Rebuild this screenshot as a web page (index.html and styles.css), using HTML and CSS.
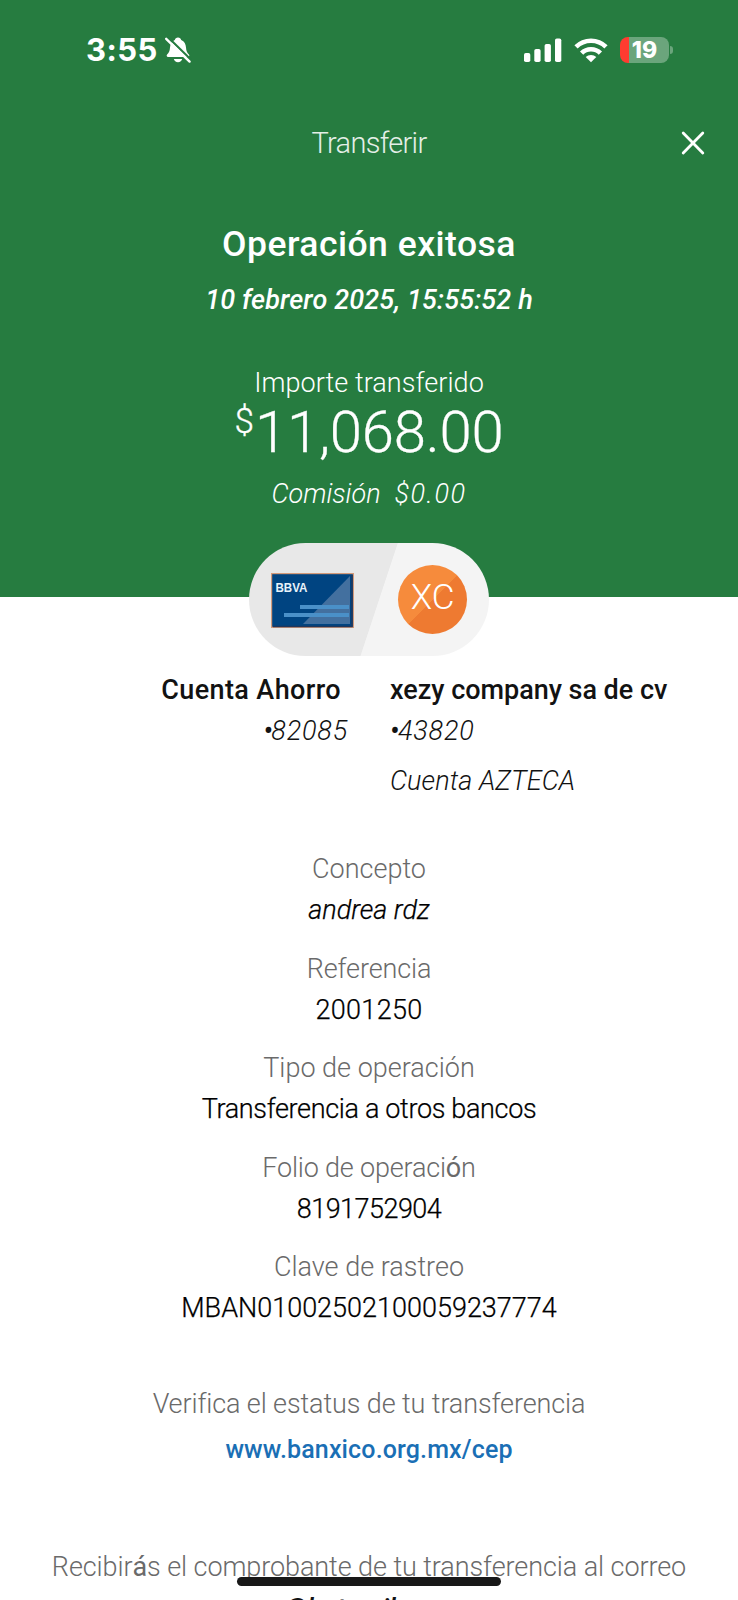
FILE: index.html
```html
<!DOCTYPE html>
<html lang="es">
<head>
<meta charset="utf-8">
<title>Transferir</title>
<link rel="stylesheet" href="styles.css">
</head>
<body>
<main class="screen">
  <header class="hero">
    <div class="status">
      <div class="status-left">
        <span class="time">3:55</span>
        <svg class="bell" width="28" height="28" viewBox="0 0 28 28">
          <path d="M14 1.500c1.700 0 2.900 1 3.200 2.400 3.300 1.200 4.600 4.200 4.800 7.600.2 3.600 1.200 5.400 2.900 7.100.9 1 .4 2.400-1 2.400H4.100c-1.400 0-1.900-1.400-1-2.400C4.800 16.900 5.800 15.100 6 11.500c.2-3.400 1.500-6.400 4.800-7.600C11.100 2.500 12.300 1.500 14 1.500z" fill="#fff"/>
          <path d="M9.800 23h8.400c-.5 1.900-2 3.200-4.200 3.200S10.300 24.900 9.800 23z" fill="#fff"/>
          <path d="M4 1.200 27 23.800" stroke="#267c40" stroke-width="2.200"/>
          <path d="M2.200 2.800 25.600 25.600" stroke="#fff" stroke-width="2.400" stroke-linecap="round"/>
        </svg>
      </div>
      <div class="status-right">
        <svg width="38" height="25" viewBox="0 0 38 25" fill="#fff">
          <rect x="0" y="15" width="6.300" height="9" rx="1.800"/>
          <rect x="10.300" y="11" width="6.300" height="13" rx="1.800"/>
          <rect x="20.600" y="6" width="6.300" height="18" rx="1.800"/>
          <rect x="31" y="0.500" width="6.300" height="23.500" rx="1.800"/>
        </svg>
        <svg class="wifi" width="34" height="25" viewBox="0 0 34 25" fill="none" stroke="#fff" stroke-width="4.600">
          <path d="M2 8.900a21.300 21.300 0 0 1 30 0"/>
          <path d="M7.600 15.200a13.300 13.300 0 0 1 18.800 0"/>
          <path d="M17 24.300l-5.300-5.200a7.500 7.500 0 0 1 10.600 0z" fill="#fff" stroke="none"/>
        </svg>
        <div class="battery"><span class="level">19</span></div>
        <span class="battery-tip"></span>
      </div>
    </div>
    <nav class="nav">
      <span class="nav-title">Transferir</span>
      <svg class="close" width="24" height="24" viewBox="0 0 24 24" stroke="#fff" stroke-width="2.800" stroke-linecap="round"><path d="M2.200 2 21.800 22M21.800 2 2.200 22"/></svg>
    </nav>
    <h1 class="title">Operación exitosa</h1>
    <p class="date">10 febrero 2025, 15:55:52 h</p>
    <p class="amount-label">Importe transferido</p>
    <p class="amount"><span class="currency">$</span><span class="figure">11,068.00</span></p>
    <p class="fee"><span>Comisión</span><span class="fee-value">$0.00</span></p>
  </header>

  <div class="pill">
    <svg class="card" width="83" height="55" viewBox="0 0 83 55">
      <rect x=".6" y=".6" width="81.800" height="53.800" fill="#004481" stroke="#d39a7a" stroke-width="1.200"/>
      <path d="M79 3v48H32z" fill="#43709f"/>
      <path d="M81 2v51.500H2" fill="none" stroke="#20375c" stroke-width="1.500"/>
      <rect x="29" y="32" width="49" height="4" fill="#4a90c8"/>
      <rect x="13" y="40" width="65" height="4" fill="#4a90c8"/>
      <text class="card-brand" x="4.500" y="18.500" textLength="32" lengthAdjust="spacingAndGlyphs">BBVA</text>
    </svg>
    <div class="avatar">XC</div>
  </div>

  <section class="accounts">
    <div class="from">
      <p class="name from-name">Cuenta Ahorro</p>
      <p class="number"><span class="dot">•</span>82085</p>
    </div>
    <div class="to">
      <p class="name to-name">xezy company sa de cv</p>
      <p class="number"><span class="dot">•</span>43820</p>
      <p class="bank">Cuenta AZTECA</p>
    </div>
  </section>

  <dl class="details">
    <div class="item"><dt>Concepto</dt><dd class="italic">andrea rdz</dd></div>
    <div class="item"><dt class="reference">Referencia</dt><dd class="reference-value">2001250</dd></div>
    <div class="item"><dt>Tipo de operación</dt><dd class="kind-value">Transferencia a otros bancos</dd></div>
    <div class="item"><dt class="folio">Folio de operaci<span class="accent">ó</span>n</dt><dd class="folio-value">8191752904</dd></div>
    <div class="item"><dt>Clave de rastreo</dt><dd>MBAN01002502100059237774</dd></div>
  </dl>

  <section class="verify">
    <p class="verify-text">Verifica el estatus de tu transferencia</p>
    <a class="link">www.banxico.org.mx/cep</a>
  </section>

  <footer class="receipt">
    <p class="receipt-text">Recibir<span class="accent">á</span>s el comprobante de tu transferencia al correo</p>
    <p class="email">@hotmail.com</p>
  </footer>
  <div class="home-bar"></div>
</main>
</body>
</html>
```
FILE: styles.css
```css
* { box-sizing: border-box; }
html, body, h1, p, dl, dd { margin: 0; }
body {
  width: 738px;
  height: 1600px;
  overflow: hidden;
  background: #fff;
  font: 300 27px/40px Roboto, "Liberation Sans", sans-serif;
  color: #121212;
}
.screen {
  position: relative;
  height: 1600px;
  overflow: hidden;
  text-align: center;
}

/* Header */
.hero {
  height: 597px;
  background: #267c40;
  color: #fff;
}
.status {
  height: 123px;
  padding: 30px 65px 0 86px;
  display: flex;
  justify-content: space-between;
  align-items: flex-start;
}
.status-left, .status-right {
  display: flex;
  align-items: center;
  height: 40px;
}
.time {
  font: 700 31px/42px Inter, sans-serif;
  letter-spacing: 0.400px;
}
.bell { margin: 0 0 1px 6px; }
.wifi { margin: 0 12px; }
.battery {
  width: 49px;
  height: 26px;
  border-radius: 8px;
  background: linear-gradient(90deg, #ff3b30 9px, #6ba57c 9px);
}
.level {
  display: block;
  font: 800 23px/26px Inter, sans-serif;
}
.battery-tip {
  width: 3px;
  height: 8px;
  margin-left: 1px;
  border-radius: 0 4px 4px 0;
  background: #6ba57c;
}
.nav {
  height: 97px;
  display: grid;
  grid-template-columns: 60px 1fr 60px;
  align-items: start;
}
.nav-title {
  grid-column: 2;
  font-size: 29px;
  letter-spacing: -0.690px;
  opacity: 0.880;
}
.close {
  justify-self: start;
  margin: 8px 0 0 3px;
}
.title {
  height: 60px;
  font-size: 35.500px;
  line-height: 49px;
  font-weight: 500;
  letter-spacing: 0.480px;
}
.date {
  font-style: italic;
  font-weight: 500;
  letter-spacing: 0.130px;
}
.amount-label {
  margin-top: 43px;
  letter-spacing: 0.070px;
}
.amount {
  height: 72px;
  margin-top: -1px;
  display: flex;
  justify-content: center;
  line-height: 60px;
  -webkit-text-stroke: 0.300px #fff;
}
.currency {
  font-size: 35px;
  line-height: 40px;
  margin-right: 1px;
}
.figure { font-size: 58px; letter-spacing: -0.200px; }
.fee {
  display: flex;
  justify-content: center;
  gap: 14px;
  font-style: italic;
}
.fee-value { letter-spacing: 1.500px; }

/* Origin and destination badge */
.pill {
  position: relative;
  width: 240px;
  height: 113px;
  margin: -54px auto 0;
  padding: 0 22px;
  border-radius: 57px;
  display: flex;
  align-items: center;
  justify-content: space-between;
  background: linear-gradient(108.300deg, #e8e8e8 0 53.500%, #f4f4f4 53.800%);
}
.card { margin-top: 2px; }
.card-brand {
  font: 700 13.500px "Liberation Sans", sans-serif;
  fill: #e8f2fa;
}
.avatar {
  width: 69px;
  height: 69px;
  border-radius: 50%;
  background: linear-gradient(135deg, #f68b3c 50%, #ee7a31 50.500%);
  color: #fff;
  font-size: 35px;
  line-height: 66px;
}

/* Accounts */
.accounts {
  height: 193px;
  padding-top: 14px;
  display: grid;
  grid-template-columns: 348px 1fr;
  column-gap: 42px;
}
.from { text-align: right; }
.to { text-align: left; }
.name { font-weight: 500; height: 41px; }
.from-name { padding-right: 7px; letter-spacing: 0.390px; }
.to-name { letter-spacing: -0.030px; }
.number {
  font-style: italic;
  height: 50px;
  letter-spacing: 0.800px;
}
.dot {
  font-weight: 500;
  font-size: 27px;
  letter-spacing: -1.200px;
}
.bank { font-style: italic; letter-spacing: 0.080px; }

/* Detail list */
.details {
  display: grid;
  row-gap: 18.600px;
}
dt { color: #6a6a6a; }
dd {
  padding-top: 1px;
  color: #000;
  -webkit-text-stroke: 0.250px #000;
}
.italic { font-style: italic; }
.reference { letter-spacing: -0.120px; }
.reference-value { letter-spacing: 0.310px; }
.kind-value { letter-spacing: -0.340px; }
.folio { letter-spacing: -0.190px; }
.folio-value { letter-spacing: -0.530px; }
.accent { font-weight: 400; }

/* Status link and receipt */
.verify { margin-top: 56px; }
.verify-text, .receipt-text { color: #6a6a6a; }
.verify-text { letter-spacing: -0.110px; }
.link {
  display: block;
  margin-top: 5.500px;
  font-size: 25px;
  font-weight: 500;
  letter-spacing: 0.140px;
  color: #1a6fb5;
}
.receipt { margin-top: 77.500px; }
.receipt-text { letter-spacing: -0.080px; }
.email {
  margin-top: 2px;
  font-style: italic;
  font-weight: 500;
}
.home-bar {
  position: absolute;
  left: 237px;
  top: 1577px;
  width: 264px;
  height: 9px;
  border-radius: 5px;
  background: #181818;
}
```
